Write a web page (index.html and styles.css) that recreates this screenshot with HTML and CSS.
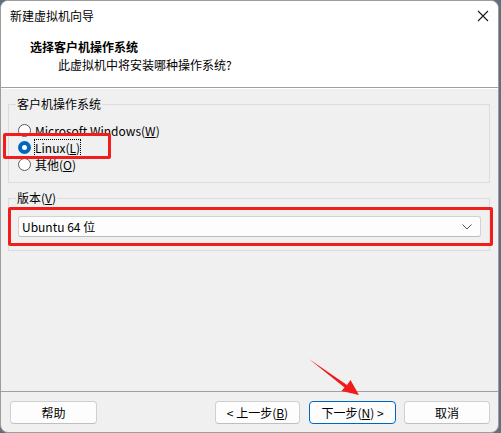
FILE: index.html
```html
<!DOCTYPE html>
<html lang="zh-CN">
<head>
<meta charset="utf-8">
<title>新建虚拟机向导</title>
<link rel="stylesheet" href="styles.css">
</head>
<body>
<div class="window">
  <div class="titlebar">
    <span class="title">新建虚拟机向导</span>
    <svg class="close" width="12" height="12" viewBox="0 0 12 12"><path d="M1 1 L11 11 M11 1 L1 11" stroke="#1a1a1a" stroke-width="1.1" fill="none"/></svg>
  </div>
  <div class="header">
    <div class="h-title">选择客户机操作系统</div>
    <div class="h-sub">此虚拟机中将安装哪种操作系统?</div>
  </div>
  <div class="content">
    <fieldset class="group group-os">
      <legend>客户机操作系统</legend>
      <div class="radio-row"><span class="radio"></span><span>Microsoft Windows(<u>W</u>)</span></div>
      <div class="radio-row"><span class="radio checked"></span><span class="focus">Linux(<u>L</u>)</span></div>
      <div class="radio-row"><span class="radio"></span><span>其他(<u>O</u>)</span></div>
    </fieldset>
    <fieldset class="group group-ver">
      <legend>版本(<u>V</u>)</legend>
      <div class="combo">
        <span>Ubuntu 64 位</span>
        <svg class="chev" width="10" height="6" viewBox="0 0 10 6"><path d="M0.5 0.5 L5 5 L9.5 0.5" stroke="#555" stroke-width="1" fill="none"/></svg>
      </div>
    </fieldset>
    <div class="spacer"></div>
  </div>
  <div class="footer">
    <button class="btn btn-help">帮助</button>
    <div class="grow"></div>
    <button class="btn btn-back">&lt; 上一步(<u>B</u>)</button>
    <button class="btn btn-next default">下一步(<u>N</u>) &gt;</button>
    <button class="btn btn-cancel">取消</button>
  </div>
</div>
<div class="mark mark-linux"></div>
<div class="mark mark-ver"></div>
<svg class="arrow" width="501" height="433" viewBox="0 0 501 433"><polygon points="309,359 347,385 350.5,380 359,395 341.5,391 344.5,387.5" fill="#f01c1c"/></svg>
</body>
</html>
```
FILE: styles.css
```css
* { box-sizing: border-box; }
html, body { margin: 0; padding: 0; }
body {
  width: 501px;
  height: 433px;
  background: #5f6f80;
  font-family: "Noto Sans CJK SC", "Noto Sans", sans-serif;
  font-size: 12px;
  color: #000;
  position: relative;
  overflow: hidden;
}
.window {
  width: 499px;
  height: 433px;
  border: 1px solid #9c9c9c;
  border-radius: 8px;
  background: #f0f0f0;
  overflow: hidden;
  display: flex;
  flex-direction: column;
}
.titlebar {
  height: 29px;
  background: #fff;
  display: flex;
  align-items: center;
  justify-content: space-between;
  padding: 0 9px 0 9px;
}
.title { line-height: 16px; }
.header {
  background: #fff;
  height: 58px;
  border-bottom: 1px solid #a0a0a0;
  padding: 9px 0 0 29px;
}
.h-title { font-weight: bold; line-height: 16px; }
.h-sub { line-height: 16px; margin-top: 2px; padding-left: 28px; }
.content {
  flex: 1;
  display: flex;
  flex-direction: column;
  padding: 0 8px 0 7px;
  border-top: 1px solid #fff;
}
.group {
  margin: 0;
  border: 1px solid #dcdcdc;
  padding: 0 8px 0 7px;
  min-width: 0;
}
.group legend {
  padding: 0 1px;
  line-height: 16px;
}
.group-os { margin-top: 7px; padding-bottom: 9px; }
.group-os legend { margin-bottom: 10px; }
.radio-row {
  display: flex;
  align-items: center;
  height: 17px;
  line-height: 16px;
}
.radio {
  width: 13px;
  height: 13px;
  border-radius: 50%;
  border: 1px solid #5a5a5a;
  background: #fff;
  margin: 0 4px 0 2px;
  flex: none;
}
.radio.checked {
  border: 4px solid #0067c0;
  background: #fff;
}
.focus { outline: 1px dotted #000; outline-offset: 0; }
.group-ver { margin-top: 7px; padding: 0 8px 13px 9px; }
.group-ver legend { margin-bottom: 10px; margin-left: -2px; }
.combo {
  height: 21px;
  background: #fdfdfd;
  border: 1px solid #d2d2d2;
  border-bottom-color: #bcbcbc;
  border-radius: 3px;
  display: flex;
  align-items: center;
  justify-content: space-between;
  padding: 0 8px 0 3px;
  line-height: 16px;
}
.chev { flex: none; }
.spacer { flex: 1; }
.footer {
  height: 41px;
  border-top: 1px solid #a0a0a0;
  display: flex;
  align-items: flex-start;
  padding: 9px 8px 0 9px;
}
.grow { flex: 1; }
.btn {
  height: 23px;
  background: #fdfdfd;
  border: 1px solid #d0d0d0;
  border-bottom-color: #c0c0c0;
  border-radius: 4px;
  font-family: inherit;
  font-size: 12px;
  line-height: 16px;
  padding: 0;
  color: #000;
}
.btn-help { width: 87px; }
.btn-back { width: 85px; }
.btn-next { width: 87px; margin-left: 9px; }
.btn-cancel { width: 86px; margin-left: 8px; }
.btn.default { border: 1px solid #0067c0; }
.mark {
  position: absolute;
  border: 3px solid #f21c1c;
  border-radius: 2px;
}
.mark-linux { left: 3px; top: 133px; width: 108px; height: 26px; }
.mark-ver { left: 8px; top: 207px; width: 485px; height: 39px; }
.arrow { position: absolute; left: 0; top: 0; pointer-events: none; }
```
